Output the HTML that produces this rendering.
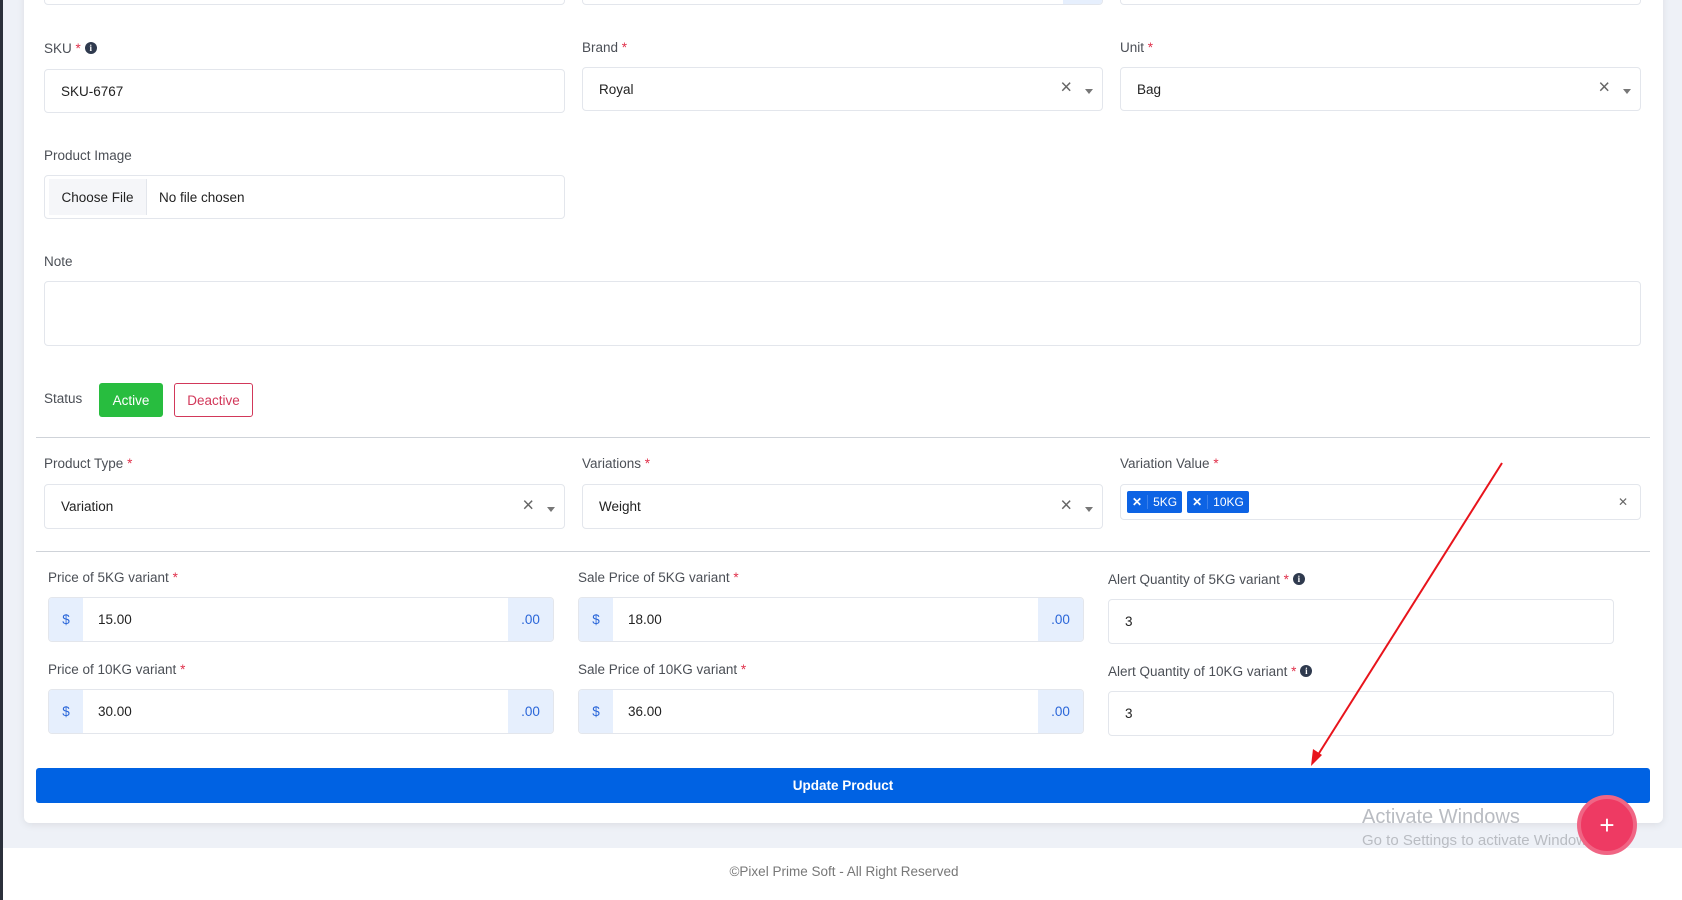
<!DOCTYPE html>
<html><head><meta charset="utf-8"><style>
*{box-sizing:border-box;margin:0;padding:0}
body{width:1682px;height:900px;position:relative;overflow:hidden;background:#fff;font-family:"Liberation Sans",Arial,sans-serif;font-size:13.5px;color:#333}
.a{position:absolute}
.bg{left:3px;top:0;width:1679px;height:848px;background:#eef1f7}
.strip{left:0;top:0;width:3px;height:900px;background:#2b303b}
.card{left:24px;top:-10px;width:1639px;height:833px;background:#fff;border-radius:6px;box-shadow:0 2px 8px rgba(0,0,0,.08)}
.lbl{font-size:13.5px;color:#4b4f56;white-space:nowrap}
.r{color:#e0314b}
.in{border:1px solid #e3e6ec;border-radius:4px;background:#fff;font-size:13.5px;color:#222;padding-left:16px;display:flex;align-items:center}
.info{display:inline-block;width:12px;height:12px;border-radius:50%;background:#2f3a4e;color:#fff;font-size:9px;font-weight:bold;text-align:center;line-height:12px;vertical-align:2px;margin-left:4px;font-family:"Liberation Serif",serif}
.x{position:absolute;font-size:20px;color:#666;top:50%;transform:translateY(-54%)}
.car{position:absolute;width:0;height:0;border-left:4px solid transparent;border-right:4px solid transparent;border-top:5px solid #777;top:50%}
.grp{display:flex;border:1px solid #e3e6ec;border-radius:4px;overflow:hidden}
.grp .p{width:34px;background:#e6effd;color:#2a66d9;display:flex;align-items:center;justify-content:center}
.grp .m{flex:1;display:flex;align-items:center;padding-left:15px;color:#222}
.grp .s{width:45px;background:#e6effd;color:#2a66d9;display:flex;align-items:center;justify-content:center}
.hr{height:1px;background:#cfd3d9}
.tag{background:#0d63e4;color:#fff;font-size:12px;border-radius:2px;display:flex;align-items:center;height:22px}
.tag b{padding:0 5px;border-right:1px solid #3b80ea;font-size:12px}
.tag span{padding:0 5px}
</style></head><body>
<div class="a bg"></div>
<div class="a strip"></div>
<div class="a card"></div>

<div class="a in" style="left:44px;top:-10px;width:521px;height:15px"></div>
<div class="a in" style="left:582px;top:-10px;width:521px;height:15px;overflow:hidden"><div style="position:absolute;right:0;top:0;width:39px;height:15px;background:#e6effd"></div></div>
<div class="a in" style="left:1120px;top:-10px;width:521px;height:15px"></div>

<div class="a lbl" style="left:44px;top:41px">SKU <span class="r">*</span><span class="info">i</span></div>
<div class="a in" style="left:44px;top:69px;width:521px;height:44px">SKU-6767</div>
<div class="a lbl" style="left:582px;top:40px">Brand <span class="r">*</span></div>
<div class="a in" style="left:582px;top:67px;width:521px;height:44px">Royal<span class="x" style="right:30px">×</span><span class="car" style="right:9px"></span></div>
<div class="a lbl" style="left:1120px;top:40px">Unit <span class="r">*</span></div>
<div class="a in" style="left:1120px;top:67px;width:521px;height:44px">Bag<span class="x" style="right:30px">×</span><span class="car" style="right:9px"></span></div>

<div class="a lbl" style="left:44px;top:148px">Product Image</div>
<div class="a in" style="left:44px;top:175px;width:521px;height:44px;padding:0"><div style="height:36px;margin-left:4px;width:98px;background:#f5f6f9;border-right:1px solid #e3e6ec;display:flex;align-items:center;justify-content:center">Choose File</div><span style="margin-left:12px">No file chosen</span></div>

<div class="a lbl" style="left:44px;top:254px">Note</div>
<div class="a in" style="left:44px;top:281px;width:1597px;height:65px"></div>

<div class="a lbl" style="left:44px;top:391px">Status</div>
<div class="a" style="left:99px;top:383px;width:64px;height:34px;background:#28bd3f;border-radius:3px;color:#fff;display:flex;align-items:center;justify-content:center">Active</div>
<div class="a" style="left:174px;top:383px;width:79px;height:34px;border:1px solid #d2385a;border-radius:3px;color:#d2385a;display:flex;align-items:center;justify-content:center">Deactive</div>
<div class="a hr" style="left:36px;top:437px;width:1614px"></div>

<div class="a lbl" style="left:44px;top:456px">Product Type <span class="r">*</span></div>
<div class="a in" style="left:44px;top:484px;width:521px;height:45px">Variation<span class="x" style="right:30px">×</span><span class="car" style="right:9px"></span></div>
<div class="a lbl" style="left:582px;top:456px">Variations <span class="r">*</span></div>
<div class="a in" style="left:582px;top:484px;width:521px;height:45px">Weight<span class="x" style="right:30px">×</span><span class="car" style="right:9px"></span></div>
<div class="a lbl" style="left:1120px;top:456px">Variation Value <span class="r">*</span></div>
<div class="a in" style="left:1120px;top:484px;width:521px;height:36px;padding-left:6px;gap:5px"><div class="tag"><b>✕</b><span>5KG</span></div><div class="tag"><b>✕</b><span>10KG</span></div><span style="position:absolute;right:12px;font-size:12px;color:#666">✕</span></div>
<div class="a hr" style="left:36px;top:551px;width:1614px"></div>

<div class="a lbl" style="left:48px;top:570px">Price of 5KG variant <span class="r">*</span></div>
<div class="a grp" style="left:48px;top:597px;width:506px;height:45px"><div class="p">$</div><div class="m">15.00</div><div class="s">.00</div></div>
<div class="a lbl" style="left:578px;top:570px">Sale Price of 5KG variant <span class="r">*</span></div>
<div class="a grp" style="left:578px;top:597px;width:506px;height:45px"><div class="p">$</div><div class="m">18.00</div><div class="s">.00</div></div>
<div class="a lbl" style="left:1108px;top:572px">Alert Quantity of 5KG variant <span class="r">*</span><span class="info">i</span></div>
<div class="a in" style="left:1108px;top:599px;width:506px;height:45px">3</div>

<div class="a lbl" style="left:48px;top:662px">Price of 10KG variant <span class="r">*</span></div>
<div class="a grp" style="left:48px;top:689px;width:506px;height:45px"><div class="p">$</div><div class="m">30.00</div><div class="s">.00</div></div>
<div class="a lbl" style="left:578px;top:662px">Sale Price of 10KG variant <span class="r">*</span></div>
<div class="a grp" style="left:578px;top:689px;width:506px;height:45px"><div class="p">$</div><div class="m">36.00</div><div class="s">.00</div></div>
<div class="a lbl" style="left:1108px;top:664px">Alert Quantity of 10KG variant <span class="r">*</span><span class="info">i</span></div>
<div class="a in" style="left:1108px;top:691px;width:506px;height:45px">3</div>

<div class="a" style="left:36px;top:768px;width:1614px;height:35px;background:#0062e3;border-radius:3px;color:#fff;display:flex;align-items:center;justify-content:center;font-size:13.5px;font-weight:bold">Update Product</div>

<div class="a" style="left:0;top:864px;width:1682px;text-align:center;color:#777;font-size:13.5px;padding-left:6px">©Pixel Prime Soft - All Right Reserved</div>

<div class="a" style="left:1362px;top:806px;color:#b9bcc2;font-size:20px;white-space:nowrap">Activate Windows</div>
<div class="a" style="left:1362px;top:832px;color:#b9bcc2;font-size:15px;white-space:nowrap">Go to Settings to activate Windows.</div>

<svg class="a" style="left:0;top:0" width="1682" height="900"><line x1="1502" y1="463" x2="1316" y2="758" stroke="#e8141c" stroke-width="2"/><path d="M1311 766 L1313 749 L1322 755 Z" fill="#e8141c"/></svg>

<div class="a" style="left:1577px;top:795px;width:60px;height:60px;border-radius:50%;background:#ee3a63;border:4px solid #f06584;color:#fff;font-size:26px;display:flex;align-items:center;justify-content:center">+</div>
</body></html>
